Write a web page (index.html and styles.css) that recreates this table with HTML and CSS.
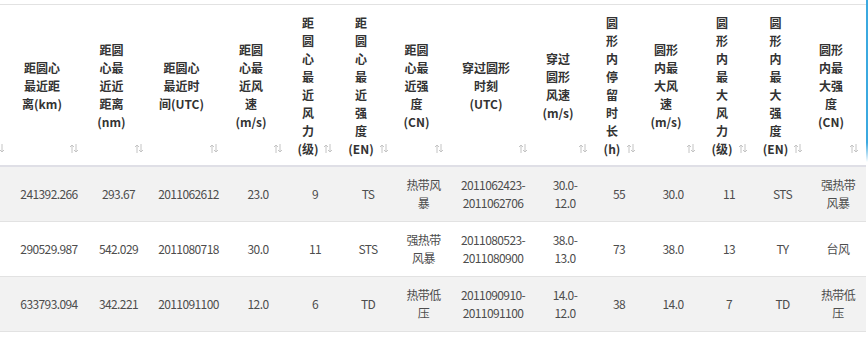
FILE: index.html
```html
<!DOCTYPE html>
<html lang="zh-CN">
<head>
<meta charset="utf-8">
<title>台风圆形区域统计</title>
<link rel="stylesheet" href="styles.css">
</head>
<body>
<div class="frame">
  <div class="viewport">
    <div class="table" role="table">
      <div class="row head" role="row">
        <div class="th" role="columnheader"><span class="label"></span><svg class="sort" viewBox="0 0 10 9"><path d="M3 9V1M1 3l2-2 2 2M7 0v8M5 6l2 2 2-2"/></svg></div>
        <div class="th" role="columnheader"><span class="label">距圆心<br>最近距<br>离(km)</span><svg class="sort" viewBox="0 0 10 9"><path d="M3 9V1M1 3l2-2 2 2M7 0v8M5 6l2 2 2-2"/></svg></div>
        <div class="th" role="columnheader"><span class="label">距圆<br>心最<br>近近<br>距离<br>(nm)</span><svg class="sort" viewBox="0 0 10 9"><path d="M3 9V1M1 3l2-2 2 2M7 0v8M5 6l2 2 2-2"/></svg></div>
        <div class="th" role="columnheader"><span class="label">距圆心<br>最近时<br>间(UTC)</span><svg class="sort" viewBox="0 0 10 9"><path d="M3 9V1M1 3l2-2 2 2M7 0v8M5 6l2 2 2-2"/></svg></div>
        <div class="th" role="columnheader"><span class="label">距圆<br>心最<br>近风<br>速<br>(m/s)</span><svg class="sort" viewBox="0 0 10 9"><path d="M3 9V1M1 3l2-2 2 2M7 0v8M5 6l2 2 2-2"/></svg></div>
        <div class="th" role="columnheader"><span class="label">距<br>圆<br>心<br>最<br>近<br>风<br>力<br>(级)</span><svg class="sort" viewBox="0 0 10 9"><path d="M3 9V1M1 3l2-2 2 2M7 0v8M5 6l2 2 2-2"/></svg></div>
        <div class="th" role="columnheader"><span class="label">距<br>圆<br>心<br>最<br>近<br>强<br>度<br>(EN)</span><svg class="sort" viewBox="0 0 10 9"><path d="M3 9V1M1 3l2-2 2 2M7 0v8M5 6l2 2 2-2"/></svg></div>
        <div class="th" role="columnheader"><span class="label">距圆<br>心最<br>近强<br>度<br>(CN)</span><svg class="sort" viewBox="0 0 10 9"><path d="M3 9V1M1 3l2-2 2 2M7 0v8M5 6l2 2 2-2"/></svg></div>
        <div class="th" role="columnheader"><span class="label">穿过圆形<br>时刻<br>(UTC)</span><svg class="sort" viewBox="0 0 10 9"><path d="M3 9V1M1 3l2-2 2 2M7 0v8M5 6l2 2 2-2"/></svg></div>
        <div class="th" role="columnheader"><span class="label">穿过<br>圆形<br>风速<br>(m/s)</span><svg class="sort" viewBox="0 0 10 9"><path d="M3 9V1M1 3l2-2 2 2M7 0v8M5 6l2 2 2-2"/></svg></div>
        <div class="th" role="columnheader"><span class="label">圆<br>形<br>内<br>停<br>留<br>时<br>长<br>(h)</span><svg class="sort" viewBox="0 0 10 9"><path d="M3 9V1M1 3l2-2 2 2M7 0v8M5 6l2 2 2-2"/></svg></div>
        <div class="th" role="columnheader"><span class="label">圆形<br>内最<br>大风<br>速<br>(m/s)</span><svg class="sort" viewBox="0 0 10 9"><path d="M3 9V1M1 3l2-2 2 2M7 0v8M5 6l2 2 2-2"/></svg></div>
        <div class="th" role="columnheader"><span class="label">圆<br>形<br>内<br>最<br>大<br>风<br>力<br>(级)</span><svg class="sort" viewBox="0 0 10 9"><path d="M3 9V1M1 3l2-2 2 2M7 0v8M5 6l2 2 2-2"/></svg></div>
        <div class="th" role="columnheader"><span class="label">圆<br>形<br>内<br>最<br>大<br>强<br>度<br>(EN)</span><svg class="sort" viewBox="0 0 10 9"><path d="M3 9V1M1 3l2-2 2 2M7 0v8M5 6l2 2 2-2"/></svg></div>
        <div class="th" role="columnheader"><span class="label">圆形<br>内最<br>大强<br>度<br>(CN)</span><svg class="sort" viewBox="0 0 10 9"><path d="M3 9V1M1 3l2-2 2 2M7 0v8M5 6l2 2 2-2"/></svg></div>
      </div>

      <div class="row body striped" role="row">
        <div class="td"></div>
        <div class="td">241392.266</div>
        <div class="td">293.67</div>
        <div class="td">2011062612</div>
        <div class="td">23.0</div>
        <div class="td">9</div>
        <div class="td">TS</div>
        <div class="td">热带风<br>暴</div>
        <div class="td">2011062423-<br>2011062706</div>
        <div class="td">30.0-<br>12.0</div>
        <div class="td">55</div>
        <div class="td">30.0</div>
        <div class="td">11</div>
        <div class="td">STS</div>
        <div class="td">强热带<br>风暴</div>
      </div>

      <div class="row body" role="row">
        <div class="td"></div>
        <div class="td">290529.987</div>
        <div class="td">542.029</div>
        <div class="td">2011080718</div>
        <div class="td">30.0</div>
        <div class="td">11</div>
        <div class="td">STS</div>
        <div class="td">强热带<br>风暴</div>
        <div class="td">2011080523-<br>2011080900</div>
        <div class="td">38.0-<br>13.0</div>
        <div class="td">73</div>
        <div class="td">38.0</div>
        <div class="td">13</div>
        <div class="td">TY</div>
        <div class="td">台风</div>
      </div>

      <div class="row body striped" role="row">
        <div class="td"></div>
        <div class="td">633793.094</div>
        <div class="td">342.221</div>
        <div class="td">2011091100</div>
        <div class="td">12.0</div>
        <div class="td">6</div>
        <div class="td">TD</div>
        <div class="td">热带低<br>压</div>
        <div class="td">2011090910-<br>2011091100</div>
        <div class="td">14.0-<br>12.0</div>
        <div class="td">38</div>
        <div class="td">14.0</div>
        <div class="td">7</div>
        <div class="td">TD</div>
        <div class="td">热带低<br>压</div>
      </div>
    </div>
  </div>
  <div class="focus-edge"></div>
</div>
</body>
</html>
```

FILE: styles.css
```css
* {
  box-sizing: border-box;
}

html, body {
  margin: 0;
  padding: 0;
  background: #ffffff;
}

body {
  font-family: "Noto Sans CJK SC", "Noto Sans", sans-serif;
  font-size: 12px;
  line-height: 18px;
  color: #555555;
}

.frame {
  display: flex;
  align-items: flex-start;
  width: 868px;
}

.viewport {
  width: 866px;
  overflow: hidden;
  padding-top: 4px;
}

.focus-edge {
  width: 2px;
  height: 162px;
  background: linear-gradient(to bottom, #3ba9e0 0%, #3ba9e0 88%, rgba(59, 169, 224, 0) 100%);
}

.table {
  --cols: 60px 74px 65px 75px 64px 50px 56px 55px 84px 60px 48px 60px 52px 55px 56px;
  width: 914px;
  margin-left: -48px;
  border-top: 1px solid #e2e2e2;
}

.row {
  display: grid;
  grid-template-columns: var(--cols);
}

.head {
  border-bottom: 2px solid #dfdfe6;
  background: #ffffff;
}

.th {
  display: flex;
  align-items: center;
  padding: 9px 7px 7px 6px;
  font-weight: bold;
  color: #333333;
  min-height: 160px;
}

.label {
  flex: 1;
  text-align: center;
  white-space: nowrap;
}

.sort {
  flex: none;
  align-self: flex-end;
  width: 10px;
  height: 9px;
  margin: 0 0 5px 3px;
  fill: none;
  stroke: #c4c4c4;
  stroke-width: 1;
}

.body {
  align-items: center;
  border-bottom: 1px solid #e2e2e2;
  background: #ffffff;
}

.body.striped {
  background: #f2f2f2;
}

.td {
  padding: 9px 3px;
  min-height: 54px;
  display: flex;
  align-items: center;
  justify-content: center;
  text-align: center;
  white-space: nowrap;
  letter-spacing: -0.6px;
  color: #4d4d4d;
}
```
